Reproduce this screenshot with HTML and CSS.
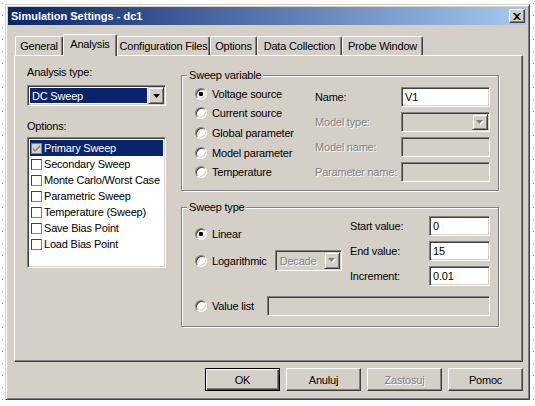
FILE: index.html
```html
<!DOCTYPE html>
<html>
<head>
<meta charset="utf-8">
<link rel="stylesheet" href="styles.css">
</head>
<body>
<div class="desk">
  <div class="window">
    <div class="titlebar">
      <span class="title">Simulation Settings - dc1</span>
      <span class="close"><svg width="8" height="7" viewBox="0 0 8 7"><path d="M0 0h2l2 2 2-2h2L5 3.5 8 7H6L4 5 2 7H0l3-3.5z" fill="#000"/></svg></span>
    </div>
    <div class="main">
      <div class="tabs">
        <div class="tab t1">General</div>
        <div class="tab t2 active">Analysis</div>
        <div class="tab t3">Configuration Files</div>
        <div class="tab t4">Options</div>
        <div class="tab t5">Data Collection</div>
        <div class="tab t6">Probe Window</div>
      </div>
      <div class="panel">
        <div class="leftcol">
          <div class="lbl">Analysis type:</div>
          <div class="combo first">
            <span class="combo-text hl">DC Sweep</span>
            <span class="dropbtn"><svg width="7" height="4" viewBox="0 0 7 4"><path d="M0 0h7L3.5 4z" fill="#000"/></svg></span>
          </div>
          <div class="lbl opts">Options:</div>
          <div class="listbox">
            <div class="item sel"><span class="cb on"><svg width="9" height="9" viewBox="0 0 9 9"><path d="M1 4l2 2 5-5v2L3 8 1 6z" fill="#808080"/></svg></span>Primary Sweep</div>
            <div class="item"><span class="cb"></span>Secondary Sweep</div>
            <div class="item"><span class="cb"></span>Monte Carlo/Worst Case</div>
            <div class="item"><span class="cb"></span>Parametric Sweep</div>
            <div class="item"><span class="cb"></span>Temperature (Sweep)</div>
            <div class="item"><span class="cb"></span>Save Bias Point</div>
            <div class="item"><span class="cb"></span>Load Bias Point</div>
          </div>
        </div>
        <div class="rightcol">
          <fieldset class="group sv">
            <legend>Sweep variable</legend>
            <div class="gbody svbody">
              <div class="radios">
                <div class="rrow"><span class="radio on"></span>Voltage source</div>
                <div class="rrow"><span class="radio"></span>Current source</div>
                <div class="rrow"><span class="radio"></span>Global parameter</div>
                <div class="rrow"><span class="radio"></span>Model parameter</div>
                <div class="rrow"><span class="radio"></span>Temperature</div>
              </div>
              <div class="fields svfields">
                <span class="flbl">Name:</span>
                <span class="edit">V1</span>
                <span class="flbl dis">Model type:</span>
                <span class="combo disabled"><span class="combo-text"></span><span class="dropbtn"><svg width="8" height="5" viewBox="0 0 8 5"><path d="M1 1h7L4.5 5z" fill="#fff"/><path d="M0 0h7L3.5 4z" fill="#808080"/></svg></span></span>
                <span class="flbl dis">Model name:</span>
                <span class="edit off"></span>
                <span class="flbl dis">Parameter name:</span>
                <span class="edit off"></span>
              </div>
            </div>
          </fieldset>
          <fieldset class="group st">
            <legend>Sweep type</legend>
            <div class="gbody stbody">
              <div class="stleft">
                <div class="rrow lin"><span class="radio on"></span>Linear</div>
                <div class="rrow log"><span class="radio"></span>Logarithmic
                  <span class="combo disabled decade"><span class="combo-text dis">Decade</span><span class="dropbtn"><svg width="8" height="5" viewBox="0 0 8 5"><path d="M1 1h7L4.5 5z" fill="#fff"/><path d="M0 0h7L3.5 4z" fill="#808080"/></svg></span></span>
                </div>
              </div>
              <div class="fields stfields">
                <span class="flbl">Start value:</span>
                <span class="edit">0</span>
                <span class="flbl">End value:</span>
                <span class="edit">15</span>
                <span class="flbl">Increment:</span>
                <span class="edit">0.01</span>
              </div>
              <div class="rrow vlist"><span class="radio"></span>Value list<span class="edit off vedit"></span></div>
            </div>
          </fieldset>
        </div>
      </div>
      <div class="buttons">
        <div class="btn default">OK</div>
        <div class="btn">Anuluj</div>
        <div class="btn dis">Zastosuj</div>
        <div class="btn">Pomoc</div>
      </div>
    </div>
  </div>
</div>
</body>
</html>
```
FILE: styles.css
```css
* { box-sizing: border-box; }
html, body { margin: 0; padding: 0; background: #fff; }
body {
  font-family: "Liberation Sans", Arial, sans-serif;
  font-size: 11px;
  letter-spacing: -0.2px;
  color: #000;
}
.desk {
  width: 535px;
  height: 406px;
  padding: 4px 0 0 5px;
  background-image: linear-gradient(#a0a0a0 1px, transparent 1px), linear-gradient(#a0a0a0 1px, transparent 1px);
  background-size: 1px 12px, 1px 12px;
  background-position: 2px 3px, 533px 3px;
  background-repeat: repeat-y, repeat-y;
}
.window {
  width: 525px;
  height: 396px;
  background: #d4d0c8;
  border: 1px solid;
  border-color: #d4d0c8 #404040 #404040 #d4d0c8;
  box-shadow: inset 1px 1px #fff, inset -1px -1px #808080;
  padding: 2px;
  display: flex;
  flex-direction: column;
}
.titlebar {
  height: 18px;
  flex: none;
  background: linear-gradient(to right, #0a246a, #a6caf0);
  display: flex;
  align-items: center;
  justify-content: space-between;
  padding: 0 2px 0 3px;
  color: #fff;
  font-weight: bold;
  letter-spacing: 0;
}
.close {
  width: 16px;
  height: 14px;
  background: #d4d0c8;
  border: 1px solid;
  border-color: #fff #404040 #404040 #fff;
  box-shadow: inset -1px -1px #808080;
  display: flex;
  align-items: center;
  justify-content: center;
}
.close svg { display: block; }
.main {
  flex: 1;
  display: flex;
  flex-direction: column;
  padding: 9px 4px 6px 6px;
}
.tabs {
  display: flex;
  align-items: flex-end;
  height: 21px;
  padding-left: 1px;
}
.tab {
  height: 19px;
  border: 1px solid;
  border-bottom: none;
  border-color: #fff #404040 #404040 #fff;
  border-radius: 2px 2px 0 0;
  box-shadow: inset -1px 0 #808080;
  display: flex;
  align-items: center;
  justify-content: center;
  padding-bottom: 1px;
  white-space: nowrap;
}
.tab.active {
  height: 22px;
  margin-bottom: -1px;
  position: relative;
  z-index: 1;
  background: #d4d0c8;
  padding-bottom: 4px;
}
.t1 { width: 48px; }
.t2 { width: 54px; }
.t3 { width: 93px; }
.t4 { width: 47px; }
.t5 { width: 85px; }
.t6 { width: 81px; }
.panel {
  height: 307px;
  border: 1px solid;
  border-color: #fff #404040 #404040 #fff;
  box-shadow: inset -1px -1px #808080;
  display: grid;
  grid-template-columns: 139px 318px;
  column-gap: 15px;
  align-items: start;
  padding: 10px 0 0 12px;
}
.lbl { line-height: 13px; }
.opts { margin-top: 14px; }
.combo, .edit, .listbox {
  border: 1px solid;
  border-color: #808080 #fff #fff #808080;
  box-shadow: inset 1px 1px #404040, inset -1px -1px #d4d0c8;
}
.combo {
  height: 20px;
  background: #fff;
  display: flex;
  padding: 1px;
}
.combo.first { margin-top: 6px; height: 21px; }
.combo.disabled { background: #d4d0c8; }
.combo-text {
  flex: 1;
  display: flex;
  align-items: center;
  padding-left: 2px;
  margin: 1px;
}
.combo-text.hl { background: #0a246a; color: #fff; }
.dropbtn {
  width: 16px;
  flex: none;
  background: #d4d0c8;
  border: 1px solid;
  border-color: #d4d0c8 #404040 #404040 #d4d0c8;
  box-shadow: inset 1px 1px #fff, inset -1px -1px #808080;
  display: flex;
  align-items: center;
  justify-content: center;
}
.dropbtn svg { display: block; }
.listbox {
  margin-top: 4px;
  height: 131px;
  background: #fff;
  padding: 2px;
}
.item {
  height: 16px;
  display: flex;
  align-items: center;
  white-space: nowrap;
}
.item.sel { background: #0a246a; color: #fff; }
.cb {
  width: 11px;
  height: 11px;
  margin: 0 2px 0 1px;
  border: 1px solid #404040;
  border-right-color: #808080;
  border-bottom-color: #808080;
  background: #fff;
  flex: none;
  display: flex;
  align-items: center;
  justify-content: center;
}
.cb.on { background: #d4d0c8; border-color: #808080; }
.cb svg { display: block; }
.rightcol {
  margin-top: 3px;
  display: flex;
  flex-direction: column;
  gap: 10px;
}
fieldset.group {
  margin: 0;
  padding: 0;
  border: 1px solid #808080;
  box-shadow: inset 1px 1px #fff, 1px 1px #fff;
  min-width: 0;
}
.group legend {
  margin-left: 5px;
  padding: 0 2px;
  line-height: 13px;
  background: #d4d0c8;
}
.sv { height: 122px; }
.st { height: 126px; }
.svbody {
  display: flex;
  justify-content: space-between;
  padding: 2px 8px 0 13px;
}
.rrow {
  display: flex;
  align-items: center;
  gap: 5px;
  white-space: nowrap;
}
.radios .rrow { height: 19.6px; }
.radio {
  width: 12px;
  height: 12px;
  flex: none;
  border-radius: 50%;
  background: #fff;
  border: 1px solid;
  border-color: #808080 #fff #fff #808080;
  box-shadow: inset 1px 1px #404040, inset -1px -1px #d4d0c8;
}
.radio.on { background: radial-gradient(circle, #000 0 2px, #fff 2.4px); }
.fields {
  display: grid;
  grid-auto-rows: 20px;
  row-gap: 5px;
  align-items: center;
}
.svfields {
  grid-template-columns: 86px 89px;
  margin-top: 3px;
}
.stfields { grid-template-columns: 79px 61px; }
.flbl { white-space: nowrap; }
.dis { color: #808080; text-shadow: 1px 1px #fff; }
.edit {
  height: 20px;
  background: #fff;
  display: flex;
  align-items: center;
  padding-left: 3px;
}
.edit.off { background: #d4d0c8; }
.stbody {
  display: grid;
  grid-template-columns: 1fr auto;
  padding: 2px 8px 0 13px;
}
.stleft { padding-top: 8px; }
.lin { height: 20px; margin-bottom: 6px; }
.log { height: 21px; gap: 5px; }
.decade {
  width: 67px;
  height: 21px;
  margin-left: 3px;
}
.vlist {
  grid-column: 1 / -1;
  margin-top: 10px;
  height: 20px;
}
.vedit { width: 223px; margin-left: auto; }
.buttons {
  display: flex;
  justify-content: flex-end;
  gap: 6px;
  margin-top: 6px;
}
.btn {
  width: 75px;
  height: 23px;
  border: 1px solid;
  border-color: #fff #404040 #404040 #fff;
  box-shadow: inset -1px -1px #808080;
  display: flex;
  align-items: center;
  justify-content: center;
}
.btn.default {
  border-color: #000;
  box-shadow: inset 1px 1px #fff, inset -1px -1px #404040, inset -2px -2px #808080;
}
```
